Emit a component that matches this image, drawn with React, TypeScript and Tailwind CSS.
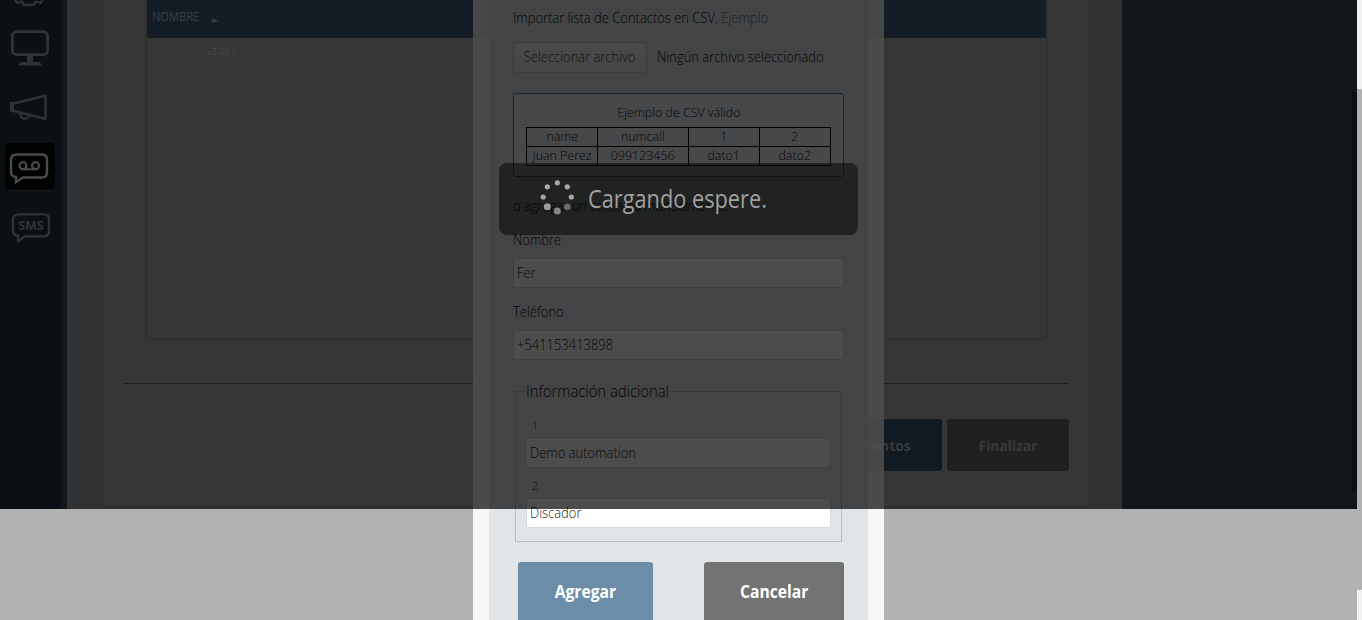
import React from "react";

const headers = ["name", "numcall", "1", "2"];
const sample = ["Juan Perez", "099123456", "dato1", "dato2"];
const dots = [
  { x: 17.3, y: 2.8, r: 2.6, c: "#a8a8a8" },
  { x: 27.3, y: 6.8, r: 2.6, c: "#a8a8a8" },
  { x: 31.3, y: 17, r: 2.6, c: "#a8a8a8" },
  { x: 27.3, y: 26.8, r: 3.3, c: "#6c6c6c" },
  { x: 17.3, y: 31, r: 3.5, c: "#858585" },
  { x: 7.3, y: 26.8, r: 3.5, c: "#9c9c9c" },
  { x: 3.2, y: 17, r: 2.6, c: "#a8a8a8" },
  { x: 7.3, y: 6.8, r: 2.6, c: "#a8a8a8" },
];

/* Slightly condensed lettering, anchored left or centred. */
function Narrow({ children, center = false }: { children: React.ReactNode; center?: boolean }) {
  return (
    <span className={center ? "inline-block origin-center scale-x-[.92] whitespace-nowrap" : "inline-block origin-left scale-x-[.925] whitespace-nowrap"}>
      {children}
    </span>
  );
}

function Sidebar() {
  return (
    <aside className="flex h-full w-[67px] shrink-0 border-r-[6px] border-[#10161b] bg-[#0c1014] text-[#303437]">
      <div className="flex w-full flex-col pl-[5px]">
        <svg className="ml-[7px] h-[7px] w-[34px]" viewBox="0 0 34 7" fill="none" stroke="currentColor" strokeWidth="2.2">
          <path d="M3 0l2 3 5-1.500 2 3.300h9.500l2-3.300 5 1.500 2-3" />
        </svg>
        <svg className="mt-[22px] ml-[5px] h-[38px] w-[40px]" viewBox="0 0 40 38" fill="none" stroke="currentColor">
          <rect x="2.400" y="2.700" width="35.200" height="23" rx="4.500" strokeWidth="2.800" />
          <path d="M17 26h6v7h5.500q2.500 0 3 3.500H8.500q.5-3.500 3-3.500H17z" fill="currentColor" stroke="none" />
        </svg>
        <svg className="mt-[26px] ml-[4px] h-[30px] w-[40px]" viewBox="0 0 40 30" fill="none" stroke="currentColor" strokeWidth="2.400">
          <path d="M3 11L36.500 2.500V26L3 17.500" />
          <path d="M3 9v10" strokeWidth="4" />
          <path d="M11 20c-1 7 9 7 10 2" strokeWidth="2.400" />
        </svg>
        <div className="mt-[20px] flex h-[48px] w-[50px] justify-center rounded-[5px] border-b border-[#1c1c1c] bg-[#010202] pt-[9px] pr-[2px] text-[#4b4b4b]">
          <svg className="h-[32px] w-[40px]" viewBox="0 0 40 32" fill="none" stroke="currentColor">
            <path d="M8 2.500h25q5 0 5 5v13q0 5-5 5H14l-7 4.500v-5q-5-.5-5-5V7.500q0-5 6-5z" strokeWidth="2.400" />
            <circle cx="14" cy="13.700" r="3.500" strokeWidth="2.200" />
            <circle cx="26.500" cy="13.700" r="3.500" strokeWidth="2.200" />
            <path d="M13 17.300h14.500" strokeWidth="2" />
          </svg>
        </div>
        <svg className="mt-[21px] ml-[6px] h-[32px] w-[40px]" viewBox="0 0 40 32" fill="none" stroke="currentColor">
          <path d="M8 2.300h25q5 0 5 5v12q0 5-5 5H14l-7 4.500v-5q-5-.5-5-5V7.300q0-5 6-5z" strokeWidth="2.300" />
          <text x="20" y="17.800" textAnchor="middle" fontFamily="Open Sans, sans-serif" fontSize="12" fontWeight="700" fill="currentColor" stroke="none" textLength="25" lengthAdjust="spacingAndGlyphs">SMS</text>
        </svg>
      </div>
    </aside>
  );
}

function CampaignPage() {
  return (
    <div className="flex h-[509px] w-[1357px] bg-[#10161a]">
      <Sidebar />
      <main className="flex h-full w-[1055px] bg-[#303234] pr-[32px] pb-[2px] pl-[35px]">
        <section className="flex w-full flex-col border border-t-0 border-[#292929] bg-[#363636] pr-[20px] pl-[20px]">
          <div className="mx-[23px] mr-[22px] h-[339px] rounded-b-[5px] border border-t-0 border-[#2d2d2d] shadow-[0_0_3px_#2b2b2b]">
            <div className="flex h-[38px] items-start bg-[#141d26] pt-[8px] pl-[5px] text-[12px] leading-[18px] text-[#3b3e40]">
              <span className="w-[58px]"><Narrow>NOMBRE</Narrow></span>
              <svg className="mt-[10px] h-[4px] w-[8px]" viewBox="0 0 8 4"><path d="M0 4L4 0l4 4z" fill="#393b3d" /></svg>
            </div>
            <div className="pt-[7px] pl-[60px] text-[9px] leading-[14px] text-[#484848]">v3.46.0</div>
          </div>
          <div className="mt-[44px] h-px w-[946px] shrink-0 bg-[#1f1f1f]" />
          <div className="mt-[35px] flex justify-end gap-[5px] text-[15px] font-bold text-[#38393a]">
            <div className="flex h-[52px] w-[150px] items-center justify-end rounded-[3px] bg-[#111a21] pr-[29px]"><Narrow center>Eventos</Narrow></div>
            <div className="flex h-[52px] w-[122px] items-center justify-center rounded-[3px] bg-[#202020]"><Narrow center>Finalizar</Narrow></div>
          </div>
        </section>
      </main>
    </div>
  );
}

function TextField({ value }: { value: string }) {
  return (
    <div className="flex h-[30px] items-center rounded-[3px] border border-[#d5d9dc] bg-white pb-[2px] pl-[3px] text-[14px] text-[#222]">
      <Narrow>{value}</Narrow>
    </div>
  );
}

function CsvExample() {
  return (
    <div className="mt-[20px] h-[84px] w-[331px] rounded-[3px] border border-[#5f7d9c] bg-[#eef0f5] px-[12px] pt-[8px]">
      <div className="text-center text-[13.500px] leading-[20px]"><Narrow center>Ejemplo de CSV válido</Narrow></div>
      <table className="mt-[5px] w-[305px] table-fixed border-collapse text-center text-[13.500px] leading-[16px]">
        <colgroup>
          <col className="w-[71px]" />
          <col className="w-[91px]" />
          <col className="w-[71px]" />
          <col className="w-[71px]" />
        </colgroup>
        <tbody>
          {[headers, sample].map((row) => (
            <tr key={row[0]} className="h-[19px]">
              {row.map((cell) => (
                <td key={cell} className="border border-black p-0 pb-[2px] whitespace-nowrap"><Narrow center>{cell}</Narrow></td>
              ))}
            </tr>
          ))}
        </tbody>
      </table>
    </div>
  );
}

function ContactModal() {
  return (
    <div className="absolute top-0 left-[473px] flex h-[620px] w-[411px] overflow-hidden bg-[#f7f7f7] px-[16px]">
      <div className="h-full w-[379px] bg-[#e0e5e8] px-[24px] pt-[8px] text-[14px] font-light text-[#111]">
        <div className="leading-[20px] whitespace-nowrap">
          <Narrow>Importar lista de Contactos en CSV. <a className="text-[#64788c]">Ejemplo</a></Narrow>
        </div>
        <div className="mt-[14px] flex h-[31px] items-center gap-[10px]">
          <button className="flex h-[31px] w-[134px] items-center justify-center rounded-[4px] border border-[#c3c7ca] bg-linear-to-b from-[#fafafa] to-[#eaeaea] pb-[2px] text-[#444]"><Narrow center>Seleccionar archivo</Narrow></button>
          <span className="pb-[2px]"><Narrow>Ningún archivo seleccionado</Narrow></span>
        </div>
        <CsvExample />
        <div className="mt-[19px] leading-[20px]"><Narrow>o agregar un contacto manualmente:</Narrow></div>
        <div className="mt-[14px] leading-[20px]"><Narrow>Nombre</Narrow></div>
        <div className="mt-[8px]"><TextField value="Fer" /></div>
        <div className="mt-[14px] leading-[20px]"><Narrow>Teléfono</Narrow></div>
        <div className="mt-[8px]"><TextField value="+541153413898" /></div>
        <fieldset className="mt-[19px] ml-[2px] h-[163px] w-[327px] border border-[#bcc0c2] px-[10px]">
          <legend className="h-[24px] w-[142px] text-[16px] leading-[24px]"><Narrow>Información adicional</Narrow></legend>
          <div className="mt-[15px] pl-[6px] text-[11px] leading-[16px] text-[#4a3524]">1</div>
          <div className="mt-[4px]"><TextField value="Demo automation" /></div>
          <div className="mt-[10px] pl-[6px] text-[11px] leading-[16px]">2</div>
          <div className="mt-[4px]"><TextField value="Discador" /></div>
        </fieldset>
        <div className="mt-[20px] ml-[5px] flex justify-between text-[17px] font-bold text-white">
          <button className="h-[60px] w-[135px] rounded-[3px] bg-[#6b8da8]"><Narrow center>Agregar</Narrow></button>
          <button className="h-[60px] w-[140px] rounded-[3px] bg-[#737373]"><Narrow center>Cancelar</Narrow></button>
        </div>
      </div>
      <div className="absolute top-[419px] right-0 flex h-[52px] w-[16px] justify-end overflow-hidden bg-[#eeeff0] text-[15px] leading-[52px] font-bold text-white">
        <span className="-mr-[5px]"><Narrow center>ven</Narrow></span>
      </div>
      <div className="absolute top-0 left-0 h-[38px] w-[16px] bg-[#ebeeee]" />
      <div className="absolute top-0 right-0 h-[38px] w-[16px] bg-[#ebeeee]" />
      <div className="absolute inset-x-0 top-0 h-[509px] bg-black/70" />
    </div>
  );
}

function LoadingToast() {
  return (
    <div className="absolute top-[163px] left-[499px] flex h-[72px] w-[359px] rounded-[8px] bg-black/50 pt-[17px] pl-[41px]">
      <svg className="h-[36px] w-[36px]" viewBox="0 0 36 36">
        {dots.map((d) => <circle key={`${d.x}-${d.y}`} cx={d.x} cy={d.y} r={d.r} fill={d.c} />)}
      </svg>
      <span className="ml-[12px] origin-left scale-x-[.87] text-[25px] leading-[36px] whitespace-nowrap text-[#a0a0a0]">Cargando espere.</span>
    </div>
  );
}

export default function App() {
  return (
    <div className="relative h-[620px] w-[1362px] overflow-hidden bg-[#b2b2b2] font-['Open_Sans','Noto_Sans',sans-serif]">
      <CampaignPage />
      <ContactModal />
      <LoadingToast />
      <div className="absolute top-0 right-0 h-full w-[5px] bg-[#f1f1f1] pt-[89px]">
        <div className="h-[501px] rounded-[1px] bg-[#b2b2b2]" />
      </div>
      <div className="absolute top-[91px] right-[5px] h-[400px] w-[5px] bg-[#0b0f12]" />
    </div>
  );
}
